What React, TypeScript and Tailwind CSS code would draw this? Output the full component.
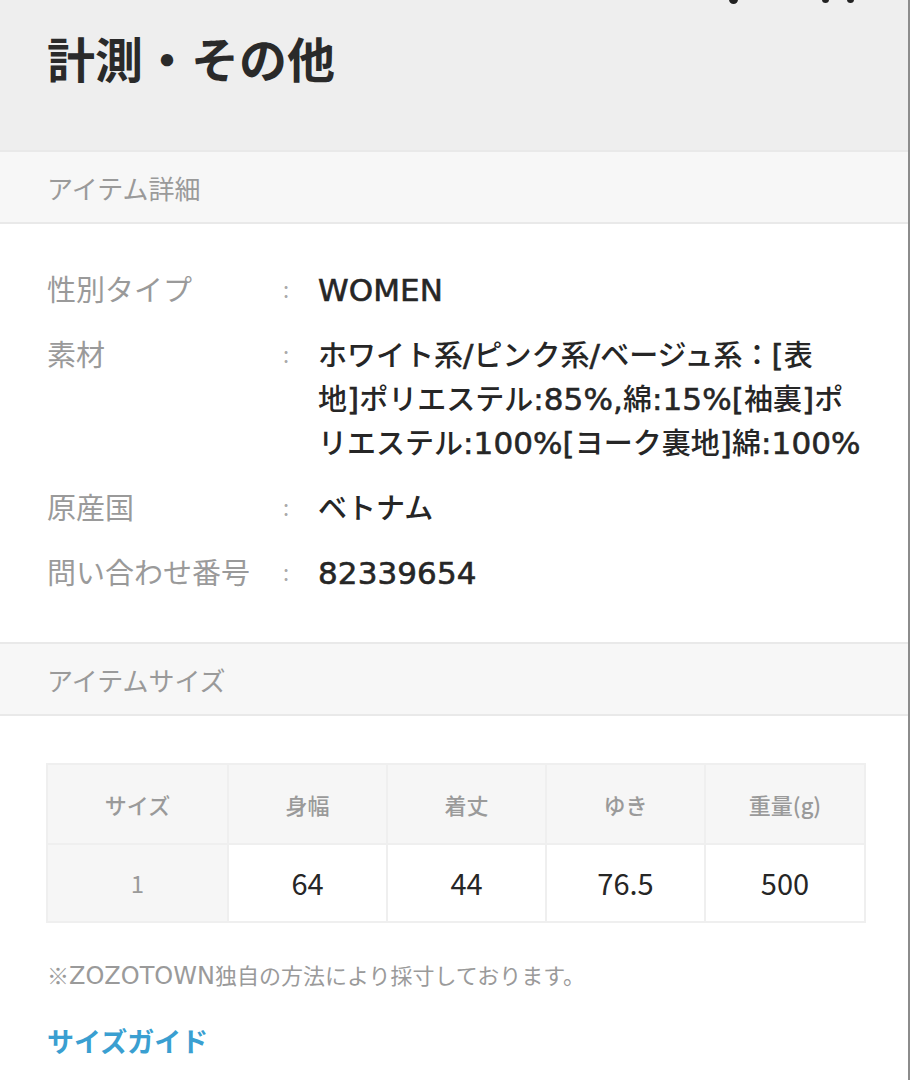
const jp = { fontFamily: '"Noto Sans CJK JP", "Noto Sans", sans-serif' }
const latin = { fontFamily: '"DejaVu Sans", "Noto Sans CJK JP", sans-serif' }

const details: { label: string; lines: string[] }[] = [
  { label: '性別タイプ', lines: ['WOMEN'] },
  {
    label: '素材',
    lines: [
      'ホワイト系/ピンク系/ベージュ系：[表',
      '地]ポリエステル:85%,綿:15%[袖裏]ポ',
      'リエステル:100%[ヨーク裏地]綿:100%',
    ],
  },
  { label: '原産国', lines: ['ベトナム'] },
  { label: '問い合わせ番号', lines: ['82339654'] },
]

const headers = ['サイズ', '身幅', '着丈', 'ゆき', '重量(g)']
const sizes = ['1', '64', '44', '76.5', '500']

// ASCII runs are set in a wider Latin face, as the source font does
function Mixed({ text, latinClass }: { text: string; latinClass: string }) {
  const parts = text.split(/([\x20-\x7E]+)/).filter(Boolean)
  return (
    <>
      {parts.map((p, i) =>
        /^[\x20-\x7E]+$/.test(p) ? (
          <span key={i} style={latin} className={latinClass}>
            {p}
          </span>
        ) : (
          <span key={i}>{p}</span>
        )
      )}
    </>
  )
}

function SectionHeader({ title }: { title: string }) {
  return (
    <div className="h-[74px] flex items-center px-[47px] bg-[#f7f7f7] border-y-2 border-[#e9e9e9] text-[26px] text-[#9a9a9a]">
      {title}
    </div>
  )
}

export default function App() {
  return (
    <div style={jp} className="relative w-[910px] min-h-[1080px] bg-white border-r-2 border-[#8c8c8c] overflow-hidden">
      {/* cut-off glyphs from the line above */}
      <span className="absolute left-[729px] top-[-5px] w-[9px] h-[9px] rounded-full bg-[#222]" />
      <span className="absolute left-[822px] top-[-4px] w-[7px] h-[7px] rounded-full bg-[#222]" />
      <span className="absolute left-[847px] top-[-4px] w-[7px] h-[7px] rounded-full bg-[#222]" />

      <div className="h-[152px] bg-[#eeeeee] px-[47px] pt-[26px]">
        <h1 className="text-[48px] font-bold text-[#2a2a2a] leading-[62px]">計測・その他</h1>
      </div>

      <div className="-mt-[2px]">
        <SectionHeader title="アイテム詳細" />
      </div>

      <div className="px-[47px] pt-[42px] pb-[49px] flex flex-col gap-[21px]">
        {details.map((d) => (
          <div key={d.label} className="flex text-[29px] leading-[44px]">
            <div className="w-[236px] shrink-0 text-[#9a9a9a]">{d.label}</div>
            <div className="w-[35px] shrink-0 text-[#aaa] text-[22px]">:</div>
            <div className="flex-1 font-medium text-[#262626] whitespace-nowrap">
              {d.lines.map((l) => (
                <div key={l} className="h-[44px]">
                  <Mixed
                    text={l}
                    latinClass="text-[31px] leading-[20px] font-normal tracking-[0.1px] [-webkit-text-stroke:0.6px_#262626]"
                  />
                </div>
              ))}
            </div>
          </div>
        ))}
      </div>

      <SectionHeader title="アイテムサイズ" />

      <div className="px-[46px] pt-[47px]">
        <table className="w-[818px] border-collapse table-fixed">
          <colgroup>
            <col className="w-[181px]" />
            <col className="w-[159px]" />
            <col className="w-[159px]" />
            <col className="w-[159px]" />
            <col className="w-[160px]" />
          </colgroup>
          <thead>
            <tr className="h-[80px] bg-[#f6f6f6]">
              {headers.map((h) => (
                <th key={h} className="border-2 border-[#efefef] text-[22px] font-medium text-[#9a9a9a]">
                  {h}
                </th>
              ))}
            </tr>
          </thead>
          <tbody>
            <tr className="h-[78px]">
              {sizes.map((s, i) => (
                <td
                  key={i}
                  className={
                    i === 0
                      ? 'border-2 border-[#efefef] bg-[#f6f6f6] text-center text-[24px] text-[#9a9a9a]'
                      : 'border-2 border-[#efefef] text-center text-[29px] text-[#262626]'
                  }
                >
                  {s}
                </td>
              ))}
            </tr>
          </tbody>
        </table>
      </div>

      <div className="px-[47px] pt-[36px] text-[22px] leading-[30px] text-[#9a9a9a]">
        <Mixed text="※ZOZOTOWN独自の方法により採寸しております。" latinClass="text-[24px] leading-[20px]" />
      </div>
      <div className="px-[47px] pt-[34px] text-[27px] leading-[36px] font-bold text-[#3a9fd1]">サイズガイド</div>
    </div>
  )
}
